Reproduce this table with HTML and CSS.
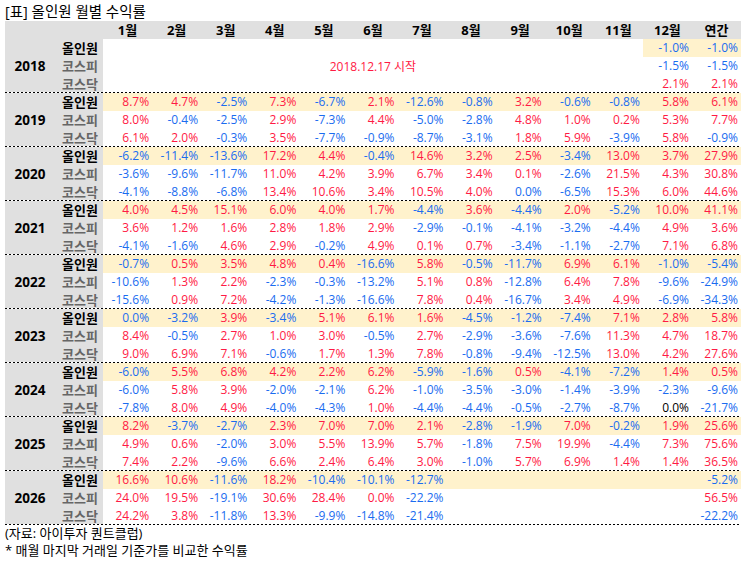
FILE: index.html
```html
<!DOCTYPE html>
<html lang="ko">
<head>
<meta charset="utf-8">
<title>올인원 월별 수익률</title>
<link rel="stylesheet" href="styles.css">
</head>
<body>
<div class="page">
  <div class="title">[표] 올인원 월별 수익률</div>
  <div class="tbl">
    <div class="head">
      <div></div><div></div>
      <div>1월</div><div>2월</div><div>3월</div><div>4월</div><div>5월</div><div>6월</div><div>7월</div><div>8월</div><div>9월</div><div>10월</div><div>11월</div><div>12월</div><div>연간</div>
    </div>

    <div class="blk">
      <div class="yr">2018</div>
      <div class="lb al">올인원</div>
      <div class="note">2018.12.17 시작</div>
      <div class="v y n">-1.0%</div><div class="v y n">-1.0%</div>
      <div class="lb">코스피</div>
      <div class="v n">-1.5%</div><div class="v n">-1.5%</div>
      <div class="lb">코스닥</div>
      <div class="v p">2.1%</div><div class="v p">2.1%</div>
      <div class="line"></div>
    </div>

    <div class="blk">
      <div class="yr">2019</div>
      <div class="lb al">올인원</div>
      <div class="v y p">8.7%</div><div class="v y p">4.7%</div><div class="v y n">-2.5%</div><div class="v y p">7.3%</div><div class="v y n">-6.7%</div><div class="v y p">2.1%</div><div class="v y n">-12.6%</div><div class="v y n">-0.8%</div><div class="v y p">3.2%</div><div class="v y n">-0.6%</div><div class="v y n">-0.8%</div><div class="v y p">5.8%</div><div class="v y p">6.1%</div>
      <div class="lb">코스피</div>
      <div class="v p">8.0%</div><div class="v n">-0.4%</div><div class="v n">-2.5%</div><div class="v p">2.9%</div><div class="v n">-7.3%</div><div class="v p">4.4%</div><div class="v n">-5.0%</div><div class="v n">-2.8%</div><div class="v p">4.8%</div><div class="v p">1.0%</div><div class="v p">0.2%</div><div class="v p">5.3%</div><div class="v p">7.7%</div>
      <div class="lb">코스닥</div>
      <div class="v p">6.1%</div><div class="v p">2.0%</div><div class="v n">-0.3%</div><div class="v p">3.5%</div><div class="v n">-7.7%</div><div class="v n">-0.9%</div><div class="v n">-8.7%</div><div class="v n">-3.1%</div><div class="v p">1.8%</div><div class="v p">5.9%</div><div class="v n">-3.9%</div><div class="v p">5.8%</div><div class="v n">-0.9%</div>
      <div class="line"></div>
    </div>

    <div class="blk">
      <div class="yr">2020</div>
      <div class="lb al">올인원</div>
      <div class="v y n">-6.2%</div><div class="v y n">-11.4%</div><div class="v y n">-13.6%</div><div class="v y p">17.2%</div><div class="v y p">4.4%</div><div class="v y n">-0.4%</div><div class="v y p">14.6%</div><div class="v y p">3.2%</div><div class="v y p">2.5%</div><div class="v y n">-3.4%</div><div class="v y p">13.0%</div><div class="v y p">3.7%</div><div class="v y p">27.9%</div>
      <div class="lb">코스피</div>
      <div class="v n">-3.6%</div><div class="v n">-9.6%</div><div class="v n">-11.7%</div><div class="v p">11.0%</div><div class="v p">4.2%</div><div class="v p">3.9%</div><div class="v p">6.7%</div><div class="v p">3.4%</div><div class="v p">0.1%</div><div class="v n">-2.6%</div><div class="v p">21.5%</div><div class="v p">4.3%</div><div class="v p">30.8%</div>
      <div class="lb">코스닥</div>
      <div class="v n">-4.1%</div><div class="v n">-8.8%</div><div class="v n">-6.8%</div><div class="v p">13.4%</div><div class="v p">10.6%</div><div class="v p">3.4%</div><div class="v p">10.5%</div><div class="v p">4.0%</div><div class="v n">0.0%</div><div class="v n">-6.5%</div><div class="v p">15.3%</div><div class="v p">6.0%</div><div class="v p">44.6%</div>
      <div class="line"></div>
    </div>

    <div class="blk">
      <div class="yr">2021</div>
      <div class="lb al">올인원</div>
      <div class="v y p">4.0%</div><div class="v y p">4.5%</div><div class="v y p">15.1%</div><div class="v y p">6.0%</div><div class="v y p">4.0%</div><div class="v y p">1.7%</div><div class="v y n">-4.4%</div><div class="v y p">3.6%</div><div class="v y n">-4.4%</div><div class="v y p">2.0%</div><div class="v y n">-5.2%</div><div class="v y p">10.0%</div><div class="v y p">41.1%</div>
      <div class="lb">코스피</div>
      <div class="v p">3.6%</div><div class="v p">1.2%</div><div class="v p">1.6%</div><div class="v p">2.8%</div><div class="v p">1.8%</div><div class="v p">2.9%</div><div class="v n">-2.9%</div><div class="v n">-0.1%</div><div class="v n">-4.1%</div><div class="v n">-3.2%</div><div class="v n">-4.4%</div><div class="v p">4.9%</div><div class="v p">3.6%</div>
      <div class="lb">코스닥</div>
      <div class="v n">-4.1%</div><div class="v n">-1.6%</div><div class="v p">4.6%</div><div class="v p">2.9%</div><div class="v n">-0.2%</div><div class="v p">4.9%</div><div class="v p">0.1%</div><div class="v p">0.7%</div><div class="v n">-3.4%</div><div class="v n">-1.1%</div><div class="v n">-2.7%</div><div class="v p">7.1%</div><div class="v p">6.8%</div>
      <div class="line"></div>
    </div>

    <div class="blk">
      <div class="yr">2022</div>
      <div class="lb al">올인원</div>
      <div class="v y n">-0.7%</div><div class="v y p">0.5%</div><div class="v y p">3.5%</div><div class="v y p">4.8%</div><div class="v y p">0.4%</div><div class="v y n">-16.6%</div><div class="v y p">5.8%</div><div class="v y n">-0.5%</div><div class="v y n">-11.7%</div><div class="v y p">6.9%</div><div class="v y p">6.1%</div><div class="v y n">-1.0%</div><div class="v y n">-5.4%</div>
      <div class="lb">코스피</div>
      <div class="v n">-10.6%</div><div class="v p">1.3%</div><div class="v p">2.2%</div><div class="v n">-2.3%</div><div class="v n">-0.3%</div><div class="v n">-13.2%</div><div class="v p">5.1%</div><div class="v p">0.8%</div><div class="v n">-12.8%</div><div class="v p">6.4%</div><div class="v p">7.8%</div><div class="v n">-9.6%</div><div class="v n">-24.9%</div>
      <div class="lb">코스닥</div>
      <div class="v n">-15.6%</div><div class="v p">0.9%</div><div class="v p">7.2%</div><div class="v n">-4.2%</div><div class="v n">-1.3%</div><div class="v n">-16.6%</div><div class="v p">7.8%</div><div class="v p">0.4%</div><div class="v n">-16.7%</div><div class="v p">3.4%</div><div class="v p">4.9%</div><div class="v n">-6.9%</div><div class="v n">-34.3%</div>
      <div class="line"></div>
    </div>

    <div class="blk">
      <div class="yr">2023</div>
      <div class="lb al">올인원</div>
      <div class="v y n">0.0%</div><div class="v y n">-3.2%</div><div class="v y p">3.9%</div><div class="v y n">-3.4%</div><div class="v y p">5.1%</div><div class="v y p">6.1%</div><div class="v y p">1.6%</div><div class="v y n">-4.5%</div><div class="v y n">-1.2%</div><div class="v y n">-7.4%</div><div class="v y p">7.1%</div><div class="v y p">2.8%</div><div class="v y p">5.8%</div>
      <div class="lb">코스피</div>
      <div class="v p">8.4%</div><div class="v n">-0.5%</div><div class="v p">2.7%</div><div class="v p">1.0%</div><div class="v p">3.0%</div><div class="v n">-0.5%</div><div class="v p">2.7%</div><div class="v n">-2.9%</div><div class="v n">-3.6%</div><div class="v n">-7.6%</div><div class="v p">11.3%</div><div class="v p">4.7%</div><div class="v p">18.7%</div>
      <div class="lb">코스닥</div>
      <div class="v p">9.0%</div><div class="v p">6.9%</div><div class="v p">7.1%</div><div class="v n">-0.6%</div><div class="v p">1.7%</div><div class="v p">1.3%</div><div class="v p">7.8%</div><div class="v n">-0.8%</div><div class="v n">-9.4%</div><div class="v n">-12.5%</div><div class="v p">13.0%</div><div class="v p">4.2%</div><div class="v p">27.6%</div>
      <div class="line"></div>
    </div>

    <div class="blk">
      <div class="yr">2024</div>
      <div class="lb al">올인원</div>
      <div class="v y n">-6.0%</div><div class="v y p">5.5%</div><div class="v y p">6.8%</div><div class="v y p">4.2%</div><div class="v y p">2.2%</div><div class="v y p">6.2%</div><div class="v y n">-5.9%</div><div class="v y n">-1.6%</div><div class="v y p">0.5%</div><div class="v y n">-4.1%</div><div class="v y n">-7.2%</div><div class="v y p">1.4%</div><div class="v y p">0.5%</div>
      <div class="lb">코스피</div>
      <div class="v n">-6.0%</div><div class="v p">5.8%</div><div class="v p">3.9%</div><div class="v n">-2.0%</div><div class="v n">-2.1%</div><div class="v p">6.2%</div><div class="v n">-1.0%</div><div class="v n">-3.5%</div><div class="v n">-3.0%</div><div class="v n">-1.4%</div><div class="v n">-3.9%</div><div class="v n">-2.3%</div><div class="v n">-9.6%</div>
      <div class="lb">코스닥</div>
      <div class="v n">-7.8%</div><div class="v p">8.0%</div><div class="v p">4.9%</div><div class="v n">-4.0%</div><div class="v n">-4.3%</div><div class="v p">1.0%</div><div class="v n">-4.4%</div><div class="v n">-4.4%</div><div class="v n">-0.5%</div><div class="v n">-2.7%</div><div class="v n">-8.7%</div><div class="v z">0.0%</div><div class="v n">-21.7%</div>
      <div class="line"></div>
    </div>

    <div class="blk">
      <div class="yr">2025</div>
      <div class="lb al">올인원</div>
      <div class="v y p">8.2%</div><div class="v y n">-3.7%</div><div class="v y n">-2.7%</div><div class="v y p">2.3%</div><div class="v y p">7.0%</div><div class="v y p">7.0%</div><div class="v y p">2.1%</div><div class="v y n">-2.8%</div><div class="v y n">-1.9%</div><div class="v y p">7.0%</div><div class="v y n">-0.2%</div><div class="v y p">1.9%</div><div class="v y p">25.6%</div>
      <div class="lb">코스피</div>
      <div class="v p">4.9%</div><div class="v p">0.6%</div><div class="v n">-2.0%</div><div class="v p">3.0%</div><div class="v p">5.5%</div><div class="v p">13.9%</div><div class="v p">5.7%</div><div class="v n">-1.8%</div><div class="v p">7.5%</div><div class="v p">19.9%</div><div class="v n">-4.4%</div><div class="v p">7.3%</div><div class="v p">75.6%</div>
      <div class="lb">코스닥</div>
      <div class="v p">7.4%</div><div class="v p">2.2%</div><div class="v n">-9.6%</div><div class="v p">6.6%</div><div class="v p">2.4%</div><div class="v p">6.4%</div><div class="v p">3.0%</div><div class="v n">-1.0%</div><div class="v p">5.7%</div><div class="v p">6.9%</div><div class="v p">1.4%</div><div class="v p">1.4%</div><div class="v p">36.5%</div>
      <div class="line"></div>
    </div>

    <div class="blk">
      <div class="yr">2026</div>
      <div class="lb al">올인원</div>
      <div class="v y p">16.6%</div><div class="v y p">10.6%</div><div class="v y n">-11.6%</div><div class="v y p">18.2%</div><div class="v y n">-10.4%</div><div class="v y n">-10.1%</div><div class="v y n">-12.7%</div><div class="v y"></div><div class="v y"></div><div class="v y"></div><div class="v y"></div><div class="v y"></div><div class="v y n">-5.2%</div>
      <div class="lb">코스피</div>
      <div class="v p">24.0%</div><div class="v p">19.5%</div><div class="v n">-19.1%</div><div class="v p">30.6%</div><div class="v p">28.4%</div><div class="v p">0.0%</div><div class="v n">-22.2%</div><div class="v"></div><div class="v"></div><div class="v"></div><div class="v"></div><div class="v"></div><div class="v p">56.5%</div>
      <div class="lb">코스닥</div>
      <div class="v p">24.2%</div><div class="v p">3.8%</div><div class="v n">-11.8%</div><div class="v p">13.3%</div><div class="v n">-9.9%</div><div class="v n">-14.8%</div><div class="v n">-21.4%</div><div class="v"></div><div class="v"></div><div class="v"></div><div class="v"></div><div class="v"></div><div class="v n">-22.2%</div>
      <div class="line"></div>
    </div>
  </div>
  <div class="foot">
    <div class="fline">(자료: 아이투자 퀀트클럽)</div>
    <div class="fline">* 매월 마지막 거래일 기준가를 비교한 수익률</div>
  </div>
</div>
</body>
</html>
```
FILE: styles.css
```css
html, body {
  margin: 0;
  padding: 0;
  background: #ffffff;
}
body {
  font-family: "Open Sans", "Noto Sans CJK KR", sans-serif;
  font-size: 12px;
  color: #000000;
}
.page {
  width: 747px;
  height: 564px;
}
.title {
  padding: 2px 0 0 5px;
  height: 19px;
  line-height: 19px;
  font-size: 14.5px;
}
.tbl {
  margin-left: 5px;
  width: 736px;
}
.head,
.blk {
  display: grid;
  grid-template-columns: 50px 48px repeat(13, 1fr);
}
.head {
  height: 18px;
  background: #e0e0e0;
  line-height: 18px;
  font-weight: 700;
  font-size: 13px;
  text-align: center;
}
.blk {
  grid-template-rows: 18px 18px 17px 1px;
}
.yr {
  grid-row: 1 / span 3;
  background: #e0e0e0;
  font-weight: 700;
  display: flex;
  align-items: center;
  justify-content: center;
  font-size: 13.5px;
}
.lb {
  background: #e0e0e0;
  text-align: right;
  padding-right: 5px;
  font-weight: 700;
  font-size: 13px;
  color: #666666;
  line-height: 18px;
}
.lb.al {
  color: #000000;
}
.note {
  grid-column: 3 / span 11;
  grid-row: 1 / span 3;
  display: flex;
  align-items: center;
  justify-content: center;
  color: #ff1a44;
}
.v {
  text-align: right;
  padding-right: 3px;
  line-height: 18px;
  white-space: nowrap;
}
.y {
  background: #fff2cc;
}
.p {
  color: #ff1a44;
}
.n {
  color: #1a6cf0;
}
.z {
  color: #000000;
}
.line {
  grid-column: 1 / -1;
  background-image: repeating-linear-gradient(90deg, #000000 0 2px, transparent 2px 4px);
}
.foot {
  padding-left: 5px;
  font-size: 13px;
}
.fline {
  height: 17px;
  line-height: 17px;
}
```
